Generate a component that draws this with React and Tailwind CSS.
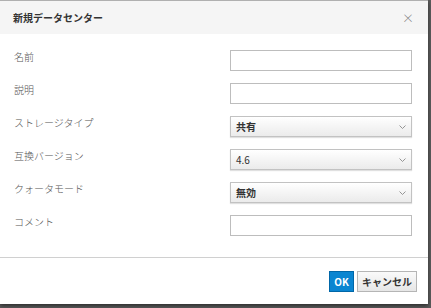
import React from "react";

const fields = [
  { label: "名前", type: "text" },
  { label: "説明", type: "text" },
  { label: "ストレージタイプ", type: "select", value: "共有", bold: true },
  { label: "互換バージョン", type: "select", value: "4.6" },
  { label: "クォータモード", type: "select", value: "無効", bold: true },
  { label: "コメント", type: "text" },
];

function Chevron() {
  return (
    <svg width="7" height="4" viewBox="0 0 7 4" fill="none" stroke="#8a8a8a" strokeWidth="0.9">
      <path d="M0.5 0.5L3.5 3.5L6.5 0.5" />
    </svg>
  );
}

export default function App() {
  return (
    <div
      className="w-[431px] h-[308px] bg-[#5c5c5c] overflow-hidden"
      style={{ fontFamily: '"Noto Sans CJK JP", "Noto Sans", sans-serif' }}
    >
      <div className="w-[428px] h-[304px] bg-white flex flex-col border-t border-[#b0b0b0] shadow-[0_2px_4px_rgba(0,0,0,0.5)]">
        {/* header */}
        <div className="h-[33px] bg-[#f5f5f5] flex items-center justify-between pl-[13px] pr-[14px] shrink-0">
          <span className="text-[10px] font-bold text-[#333] leading-none">新規データセンター</span>
          <span className="text-[12px] font-light text-[#777] leading-none">×</span>
        </div>

        {/* body */}
        <div className="flex flex-col gap-[12px] pt-[16px] pl-[14px] pr-[16px] h-[224px] shrink-0 border-b border-[#d0d0d0]">
          {fields.map((f) => (
            <div key={f.label} className="flex items-start justify-between h-[21px]">
              <span className="text-[10px] font-light text-[#555] leading-none pt-[2px]">{f.label}</span>
              {f.type === "text" ? (
                <div className="w-[182px] h-[21px] border border-[#bdbdbd] bg-white" />
              ) : (
                <div className="w-[182px] h-[21px] border border-[#c2c2c2] bg-gradient-to-b from-white to-[#ebebeb] flex items-center justify-between pl-[5px] pr-[5px] shadow-[0_1px_1px_rgba(0,0,0,0.12)]">
                  <span className={`text-[10px] text-[#333] leading-none ${f.bold ? "font-bold" : ""}`}>
                    {f.value}
                  </span>
                  <Chevron />
                </div>
              )}
            </div>
          ))}
        </div>

        {/* footer */}
        <div className="flex-1 flex items-start justify-end gap-[3px] pt-[13px] pr-[11px]">
          <button className="h-[21px] w-[25px] bg-[#0a85d1] border border-[#0067a8] text-white text-[10px] font-bold leading-none flex items-center justify-center">
            OK
          </button>
          <button className="h-[21px] w-[60px] bg-gradient-to-b from-[#fafafa] to-[#e6e6e6] border border-[#b5b5b5] text-[#333] text-[10px] font-bold leading-none flex items-center justify-center">
            キャンセル
          </button>
        </div>
      </div>
    </div>
  );
}
